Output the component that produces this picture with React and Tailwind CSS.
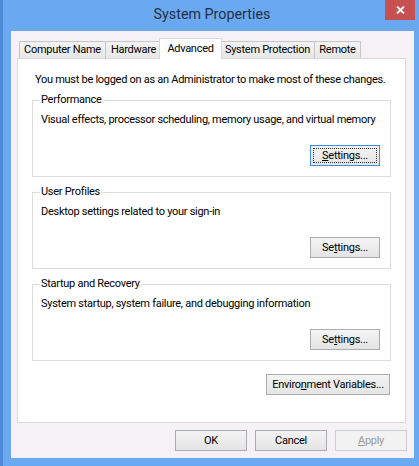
import React from 'react';

const tabs = [
  { label: 'Computer Name', w: 'w-[87px]' },
  { label: 'Hardware', w: 'w-[57px]' },
  { label: 'Advanced', w: 'w-[63px]', active: true },
  { label: 'System Protection', w: 'w-[95px]' },
  { label: 'Remote', w: 'w-[47px]' },
];

const Btn = ({ children, className = '', focused, disabled }) => (
  <button
    className={
      'h-[21px] flex items-center justify-center border leading-none whitespace-nowrap ' +
      (disabled
        ? 'border-[#cfcfcf] bg-[#f2f2f2] text-[#9a9a9a] '
        : focused
        ? 'border-[#3d8ee6] bg-gradient-to-b from-[#f4f4f4] to-[#e4e4e4] text-black '
        : 'border-[#acacac] bg-gradient-to-b from-[#f4f4f4] to-[#e4e4e4] text-black ') +
      className
    }
  >
    {focused ? (
      <span className="w-[calc(100%-4px)] h-[15px] border border-dotted border-[#333] flex items-center justify-center">
        {children}
      </span>
    ) : (
      children
    )}
  </button>
);

const Group = ({ title, text, children }) => (
  <fieldset className="min-w-0 border border-[#dcdcdc] px-[8px] pb-[10px]">
    <legend className="ml-[-1px] px-[1px] leading-[14px]">{title}</legend>
    <p className="mt-[5px] leading-[15px] whitespace-nowrap">{text}</p>
    <div className="mt-[18px] flex justify-end mr-[2px]">{children}</div>
  </fieldset>
);

export default function App() {
  return (
    <div className="w-[419px] h-[466px] bg-[#6aa9f2] border-l-[3px] border-[#4e8bd8] flex flex-col font-['Roboto',sans-serif] text-[11px] tracking-[-0.28px] text-black">
      <div className="relative h-[31px] flex items-center justify-center pr-[4px]">
        <span className="text-[14.3px] tracking-normal text-[#24303f] mt-[-1px] ml-[6px]">System Properties</span>
        <div className="absolute right-[4px] top-0 w-[30px] h-[20px] bg-[#c75050] flex items-center justify-center">
          <svg width="9" height="8" viewBox="0 0 9 8">
            <path d="M1 0.5 L8 7.5 M8 0.5 L1 7.5" stroke="white" strokeWidth="1.8" />
          </svg>
        </div>
      </div>

      <div className="flex-1 ml-[8px] mr-[5px] mb-[8px] bg-[#f5f1f5] pl-[6px] pr-[8px] pt-[6px] flex flex-col">
        <div className="h-[21px] flex items-end pl-[2px] whitespace-nowrap">
          {tabs.map((t) =>
            t.active ? (
              <div
                key={t.label}
                className={`${t.w} h-[21px] -mb-[1px] -mx-[2px] relative z-10 bg-white border border-b-0 border-[#d9d9d9] flex items-start justify-center pt-[2px]`}
              >
                {t.label}
              </div>
            ) : (
              <div
                key={t.label}
                className={`${t.w} h-[17px] -mr-[1px] bg-gradient-to-b from-[#f3f3f3] to-[#e7e7e7] border border-b-0 border-[#c6c6c6] flex items-center justify-center pt-[1px]`}
              >
                {t.label}
              </div>
            )
          )}
        </div>

        <div className="h-[365px] bg-white border border-[#d9d9d9] px-[14px] pt-[13px]">
          <p className="pl-[3px] leading-[15px] whitespace-nowrap">
            You must be logged on as an Administrator to make most of these changes.
          </p>
          <div className="mt-[6px] flex flex-col gap-[8px]">
            <Group title="Performance" text="Visual effects, processor scheduling, memory usage, and virtual memory">
              <Btn focused className="w-[70px]">
                <span><u>S</u>ettings...</span>
              </Btn>
            </Group>
            <Group title="User Profiles" text="Desktop settings related to your sign-in">
              <Btn className="w-[70px]">
                <span>Se<u>t</u>tings...</span>
              </Btn>
            </Group>
            <Group title="Startup and Recovery" text="System startup, system failure, and debugging information">
              <Btn className="w-[70px]">
                <span>Se<u>t</u>tings...</span>
              </Btn>
            </Group>
          </div>
          <div className="mt-[13px] flex justify-end mr-[1px]">
            <Btn className="w-[124px]">
              <span>Enviro<u>n</u>ment Variables...</span>
            </Btn>
          </div>
        </div>

        <div className="mt-[7px] flex justify-end gap-[8px] -mr-[1px]">
          <Btn className="w-[72px]">OK</Btn>
          <Btn className="w-[72px]">Cancel</Btn>
          <Btn disabled className="w-[72px]">
            <span><u>A</u>pply</span>
          </Btn>
        </div>
      </div>
    </div>
  );
}
